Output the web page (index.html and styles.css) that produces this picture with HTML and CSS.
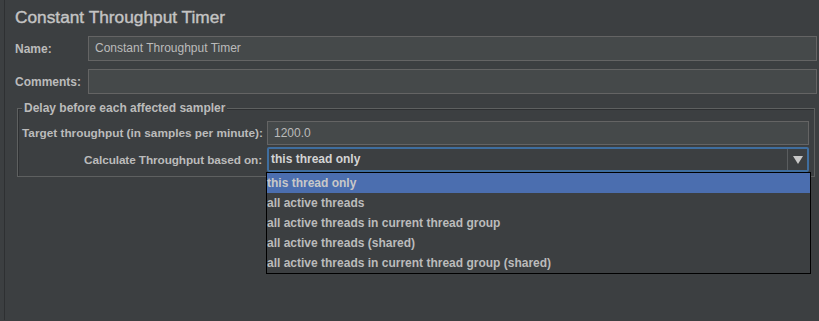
FILE: index.html
```html
<!DOCTYPE html>
<html>
<head>
<meta charset="utf-8">
<link rel="stylesheet" href="styles.css">
</head>
<body>
<div class="panel">
  <div class="title">Constant Throughput Timer</div>
  <div class="row name-row">
    <label class="lbl">Name:</label>
    <div class="field">Constant Throughput Timer</div>
  </div>
  <div class="row comments-row">
    <label class="lbl">Comments:</label>
    <div class="field"></div>
  </div>
  <div class="group">
    <div class="legend">Delay before each affected sampler</div>
    <div class="grow target-row">
      <label class="glbl">Target throughput (in samples per minute):</label>
      <div class="field gfield">1200.0</div>
    </div>
    <div class="grow calc-row">
      <label class="glbl">Calculate Throughput based on:</label>
      <div class="combo">
        <div class="combo-text">this thread only</div>
        <div class="combo-btn"><svg width="10" height="9" viewBox="0 0 10 9"><polygon points="0,1 10,1 5,9" fill="#c8c8c8"/></svg></div>
      </div>
    </div>
  </div>
  <ul class="popup">
    <li class="sel">this thread only</li>
    <li>all active threads</li>
    <li>all active threads in current thread group</li>
    <li>all active threads (shared)</li>
    <li>all active threads in current thread group (shared)</li>
  </ul>
</div>
</body>
</html>
```
FILE: styles.css
```css
html, body {
  margin: 0;
  padding: 0;
  background: #3c3f41;
  width: 819px;
  height: 321px;
  overflow: hidden;
  font-family: "Liberation Sans", Arial, sans-serif;
  color: #bbbbbb;
}
.panel {
  position: relative;
  height: 321px;
  margin-left: 4px;
  border-left: 1px solid #2e3032;
  box-sizing: border-box;
}
.title {
  font-size: 17.3px;
  font-weight: normal;
  padding-left: 10px;
  height: 36px;
  line-height: 36px;
  box-sizing: border-box;
  margin-top: -1px;
  margin-bottom: 1px;
  color: #c4c4c4;
  -webkit-text-stroke: 0.4px #c4c4c4;
}
.row {
  display: flex;
  align-items: center;
  height: 25px;
}
.comments-row { margin-top: 8px; }
.lbl {
  width: 73px;
  padding-left: 10px;
  font-size: 12px;
  font-weight: bold;
  box-sizing: content-box;
}
.field {
  flex: none;
  width: 729px;
  height: 25px;
  box-sizing: border-box;
  background: #45494a;
  border: 1px solid #646464;
  font-size: 12px;
  line-height: 23px;
  padding-left: 6px;
  color: #bbbbbb;
}
.group {
  position: relative;
  margin: 14px 0 0 12px;
  width: 798px;
  height: 69px;
  box-sizing: border-box;
  border: 1px solid #5e6060;
  box-shadow: inset 1px 1px 0 #2e3032;
  padding-top: 12px;
}
.legend {
  position: absolute;
  top: -8px;
  left: 4px;
  padding: 0 2px;
  background: #3c3f41;
  font-size: 12px;
  font-weight: bold;
  line-height: 15px;
}
.grow {
  display: flex;
  align-items: center;
}
.glbl {
  width: 245px;
  padding-left: 4px;
  box-sizing: border-box;
  text-align: right;
  font-size: 11.8px;
  font-weight: bold;
  white-space: nowrap;
}
.target-row .glbl { text-align: left; }
.calc-row .glbl { letter-spacing: -0.1px; padding-right: 1px; }
.gfield {
  width: 542px;
  height: 24px;
  margin-left: 4px;
  line-height: 22px;
}
.calc-row { margin-top: 2px; }
.combo {
  display: flex;
  width: 542px;
  height: 25px;
  margin-left: 4px;
  box-sizing: border-box;
  border: 2px solid #3f6e9f;
  border-radius: 2px;
  background: #3c3f41;
}
.combo-text {
  flex: 1;
  font-size: 12px;
  font-weight: bold;
  line-height: 21px;
  padding-left: 2px;
  color: #d4d4d4;
}
.combo-btn {
  width: 19px;
  border-left: 1px solid #5a5d5f;
  display: flex;
  align-items: center;
  justify-content: center;
}
.popup {
  position: absolute;
  left: 261px;
  top: 173px;
  width: 545px;
  margin: 0;
  padding: 0;
  list-style: none;
  border: 1px solid #000000;
  background: #3c3f41;
  box-sizing: border-box;
}
.popup li {
  height: 20px;
  line-height: 20px;
  font-size: 12px;
  font-weight: bold;
  padding-left: 0;
  color: #bbbbbb;
}
.popup li.sel {
  background: #4b6eaf;
  color: #c8c8c8;
}
```
